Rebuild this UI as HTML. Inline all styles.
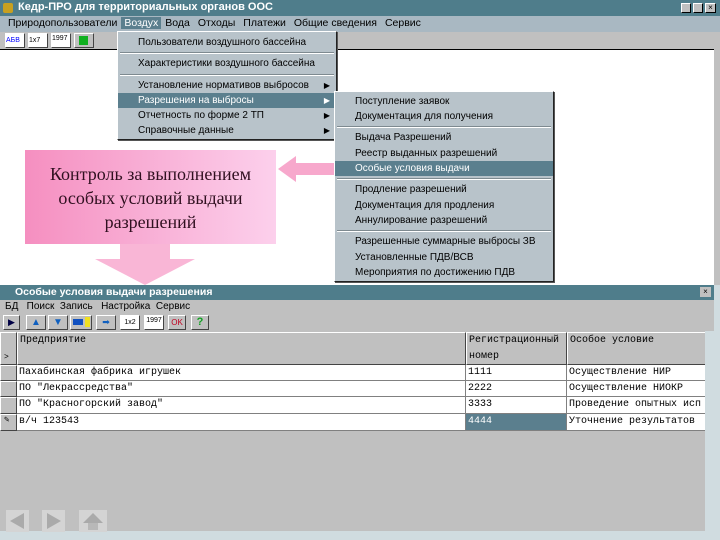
<!DOCTYPE html>
<html><head><meta charset="utf-8"><style>
*{margin:0;padding:0;box-sizing:border-box}
body{width:720px;height:540px;overflow:hidden;background:#c0c0c0;position:relative;font-family:"Liberation Sans","DejaVu Sans",sans-serif;font-size:10px;color:#000}
.a{position:absolute}
.title{background:#4f7d8b;color:#fff;font-weight:bold;font-size:11px;line-height:15px;white-space:nowrap}
.mb{background:#a9b8c2;font-size:10.5px;line-height:15px;white-space:nowrap}
.mb span{margin:0 4px}
.menu{background:#b8c3ca;border:1px solid #fff;border-right-color:#222;border-bottom-color:#222;box-shadow:1px 1px 0 #555}
.it{position:absolute;left:0;right:0;height:15px;line-height:15px;padding-left:20px;font-size:10px;white-space:nowrap}
.hl{background:#5b7f8e;color:#fff}
.sep{position:absolute;left:2px;right:2px;height:2px;border-top:1px solid #7e8a90;border-bottom:1px solid #fff}
.arr{position:absolute;right:6px;font-size:8px}
.tb{position:absolute;width:18px;height:15px;background:#c0c0c0;border:1px solid #fff;border-right-color:#444;border-bottom-color:#444}
.grid{font-family:"Liberation Mono","DejaVu Sans Mono",monospace;font-size:10px}
.cell{position:absolute;background:#fff;border-right:1px solid #808080;border-bottom:1px solid #808080;line-height:15px;padding-left:2px;white-space:nowrap;overflow:hidden}
.hd{background:#c0c0c0;border-right:1px solid #444;border-bottom:1px solid #444;border-left:1px solid #fff;border-top:1px solid #fff}
</style></head><body>
<!-- main title -->
<div class="a title" style="left:0;top:0;width:720px;height:16px;padding-left:18px">Кедр-ПРО для территориальных органов ООС</div>
<div class="a" style="left:3px;top:3px;width:10px;height:10px;background:#c8a020;border-radius:2px"></div>
<div class="a" style="left:681px;top:3px;width:10px;height:10px;background:#c0c0c0;border:1px solid #fff;border-right-color:#000;border-bottom-color:#000"></div>
<div class="a" style="left:693px;top:3px;width:10px;height:10px;background:#c0c0c0;border:1px solid #fff;border-right-color:#000;border-bottom-color:#000"></div>
<div class="a" style="left:705px;top:3px;width:11px;height:10px;background:#c0c0c0;border:1px solid #fff;border-right-color:#000;border-bottom-color:#000;font-size:8px;line-height:8px;text-align:center">×</div>
<div class="a mb" style="left:0;top:16px;width:720px;height:16px;padding-left:4px"><span>Природопользователи</span><span style="background:#5b7f8e;color:#fff;padding:0 3px;margin:0">Воздух</span><span>Вода</span><span>Отходы</span><span>Платежи</span><span>Общие сведения</span><span>Сервис</span></div>
<!-- toolbar -->
<div class="a" style="left:0;top:32px;width:720px;height:17px;background:#c0c0c0"></div>
<div class="tb" style="left:5px;top:33px;width:20px;background:#fff;font-size:7px;line-height:13px;color:#00f">АБВ</div>
<div class="tb" style="left:28px;top:33px;width:20px;background:#fff;font-size:7px;line-height:13px">1x7</div>
<div class="tb" style="left:51px;top:33px;width:20px;background:#fff;font-size:7px;line-height:9px">1997</div>
<div class="tb" style="left:74px;top:33px;width:20px"><div style="margin:2px 4px;width:9px;height:9px;background:#10b020"></div></div>
<!-- white client area -->
<div class="a" style="left:0;top:49px;width:714px;height:236px;background:#fff;border-top:1px solid #000"></div>
<div class="a" style="left:714px;top:49px;width:6px;height:236px;background:#c0c0c0"></div>
<!-- menu -->
<div class="a menu" style="left:117px;top:31px;width:220px;height:109px">
<div class="it" style="top:3px">Пользователи воздушного бассейна</div>
<div class="sep" style="top:20px"></div>
<div class="it" style="top:24px">Характеристики воздушного бассейна</div>
<div class="sep" style="top:42px"></div>
<div class="it" style="top:46px">Установление нормативов выбросов<span class="arr">▶</span></div>
<div class="it hl" style="top:61px">Разрешения на выбросы<span class="arr">▶</span></div>
<div class="it" style="top:76px">Отчетность по форме 2 ТП<span class="arr">▶</span></div>
<div class="it" style="top:91px">Справочные данные<span class="arr">▶</span></div>
</div>
<!-- submenu -->
<div class="a menu" style="left:334px;top:91px;width:220px;height:191px">
<div class="it" style="top:2px">Поступление заявок</div>
<div class="it" style="top:17px">Документация для получения</div>
<div class="sep" style="top:34px"></div>
<div class="it" style="top:38px">Выдача Разрешений</div>
<div class="it" style="top:54px">Реестр выданных разрешений</div>
<div class="it hl" style="top:69px">Особые условия выдачи</div>
<div class="sep" style="top:86px"></div>
<div class="it" style="top:90px">Продление разрешений</div>
<div class="it" style="top:106px">Документация для продления</div>
<div class="it" style="top:121px">Аннулирование разрешений</div>
<div class="sep" style="top:138px"></div>
<div class="it" style="top:142px">Разрешенные суммарные выбросы ЗВ</div>
<div class="it" style="top:158px">Установленные ПДВ/ВСВ</div>
<div class="it" style="top:173px">Мероприятия по достижению ПДВ</div>
</div>
<!-- pink callout -->
<div class="a" style="left:25px;top:150px;width:251px;height:94px;background:linear-gradient(90deg,#f58fc0,#fcd0ec);font-family:'Liberation Serif',serif;font-size:18px;line-height:24px;text-align:center;color:#301020;padding-top:12px">Контроль за выполнением<br>особых условий выдачи<br>разрешений</div>
<svg class="a" style="left:276px;top:154px" width="60" height="30"><polygon points="2,15 20,2 20,9 58,9 58,21 20,21 20,28" fill="#f7a8cc"/></svg>
<svg class="a" style="left:95px;top:244px" width="110" height="42"><polygon points="25,0 75,0 75,15 100,15 50,41 0,15 25,15" fill="#f9b6d6"/></svg>
<!-- inner window -->
<div class="a title" style="left:0;top:285px;width:714px;height:15px;padding-left:15px;font-size:10.5px;line-height:14px">Особые условия выдачи разрешения</div>
<div class="a" style="left:700px;top:287px;width:11px;height:10px;background:#c0c0c0;font-size:8px;line-height:9px;text-align:center">×</div>
<div class="a" style="left:714px;top:285px;width:6px;height:255px;background:#d0dce0"></div>
<div class="a" style="left:0;top:300px;width:714px;height:15px;font-size:10px;line-height:14px;white-space:nowrap;padding-left:5px">БД &nbsp; Поиск &nbsp;Запись &nbsp; Настройка &nbsp;Сервис</div>
<div class="tb" style="left:3px;top:315px;width:17px;color:#004;font-size:9px;line-height:13px;text-align:center">▶</div>
<div class="tb" style="left:26px;top:315px;width:20px;color:#1060c0;font-size:10px;line-height:13px;text-align:center">▲</div>
<div class="tb" style="left:48px;top:315px;width:20px;color:#1060c0;font-size:10px;line-height:13px;text-align:center">▼</div>
<div class="tb" style="left:70px;top:315px;width:22px"><div style="margin:3px 2px;width:10px;height:6px;background:#1050c0;display:inline-block"></div><div style="width:5px;height:10px;background:#f0e020;display:inline-block;vertical-align:top;margin-top:1px"></div></div>
<div class="tb" style="left:96px;top:315px;width:20px;color:#1060c0;font-size:9px;line-height:13px;text-align:center">➡</div>
<div class="tb" style="left:120px;top:315px;width:20px;background:#fff;font-size:7px;line-height:13px;text-align:center">1x2</div>
<div class="tb" style="left:144px;top:315px;width:20px;background:#fff;font-size:7px;line-height:9px;text-align:center">1997</div>
<div class="tb" style="left:168px;top:315px;width:18px;color:#c00020;font-size:8px;line-height:13px;text-align:center">OK</div>
<div class="tb" style="left:191px;top:315px;width:18px;color:#10a020;font-size:11px;font-weight:bold;line-height:13px;text-align:center">?</div>
<!-- grid -->
<div class="grid">
<div class="a hd" style="left:0;top:332px;width:17px;height:33px;font-size:8px;line-height:50px;padding-left:3px">&gt;</div>
<div class="cell hd" style="left:17px;top:332px;width:449px;height:33px">Предприятие</div>
<div class="cell hd" style="left:466px;top:332px;width:101px;height:33px;line-height:16px">Регистрационный<br>номер</div>
<div class="cell hd" style="left:567px;top:332px;width:140px;height:33px">Особое условие</div>
<div class="a hd" style="left:0;top:365px;width:17px;height:16px"></div>
<div class="cell" style="left:17px;top:365px;width:449px;height:16px">Пахабинская фабрика игрушек</div>
<div class="cell" style="left:466px;top:365px;width:101px;height:16px">1111</div>
<div class="cell" style="left:567px;top:365px;width:140px;height:16px">Осуществление НИР</div>
<div class="a hd" style="left:0;top:381px;width:17px;height:16px"></div>
<div class="cell" style="left:17px;top:381px;width:449px;height:16px">ПО "Лекрассредства"</div>
<div class="cell" style="left:466px;top:381px;width:101px;height:16px">2222</div>
<div class="cell" style="left:567px;top:381px;width:140px;height:16px">Осуществление НИОКР</div>
<div class="a hd" style="left:0;top:397px;width:17px;height:17px"></div>
<div class="cell" style="left:17px;top:397px;width:449px;height:17px">ПО "Красногорский завод"</div>
<div class="cell" style="left:466px;top:397px;width:101px;height:17px">3333</div>
<div class="cell" style="left:567px;top:397px;width:140px;height:17px">Проведение опытных исп</div>
<div class="a hd" style="left:0;top:414px;width:17px;height:17px;font-size:9px;padding-left:3px">✎</div>
<div class="cell" style="left:17px;top:414px;width:449px;height:17px">в/ч 123543</div>
<div class="cell" style="left:466px;top:414px;width:101px;height:17px;background:#5b7f8e;color:#fff">4444</div>
<div class="cell" style="left:567px;top:414px;width:140px;height:17px">Уточнение результатов</div>
</div>
<div class="a" style="left:705px;top:331px;width:9px;height:200px;background:#d0dce0"></div>
<div class="a" style="left:0;top:531px;width:714px;height:9px;background:#d0dce0"></div>
<!-- nav buttons -->
<div class="a" style="left:6px;top:510px;width:23px;height:22px;background:#d4d4d4"><svg width="23" height="22"><polygon points="4,11 18,3 18,19" fill="#aaa"/></svg></div>
<div class="a" style="left:42px;top:510px;width:23px;height:22px;background:#d4d4d4"><svg width="23" height="22"><polygon points="19,11 5,3 5,19" fill="#aaa"/></svg></div>
<div class="a" style="left:79px;top:510px;width:28px;height:22px;background:#d4d4d4"><svg width="28" height="22"><polygon points="14,3 24,13 4,13" fill="#aaa"/><rect x="9" y="13" width="10" height="7" fill="#b8b8b8"/></svg></div>
</body></html>
